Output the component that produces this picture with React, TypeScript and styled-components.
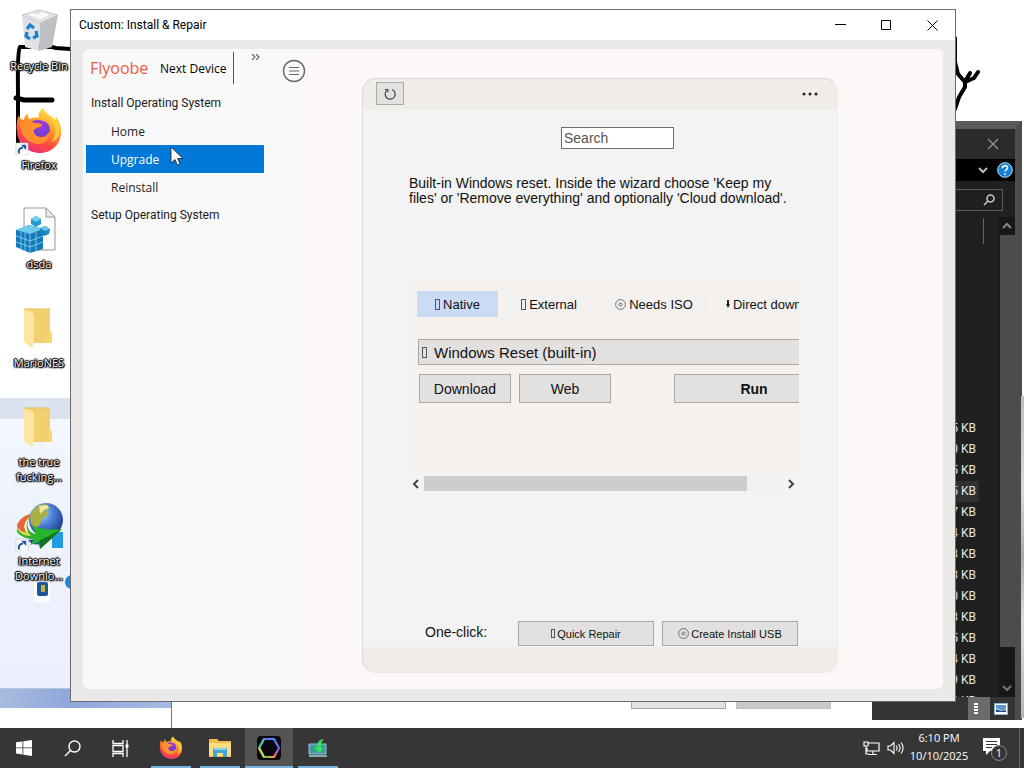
import React from 'react';
import styled, { createGlobalStyle, css } from 'styled-components';

const ui = `"Open Sans", "Noto Sans", sans-serif`;
const compact = `Roboto, "Open Sans", sans-serif`;
const sans = `"Liberation Sans", Arial, sans-serif`;

const GlobalStyle = createGlobalStyle`
  *, *::before, *::after { box-sizing: border-box; }
  html, body, #root { height: 100%; }
  body { margin: 0; background: #fff; overflow: hidden; }
  button, input { font: inherit; color: inherit; margin: 0; padding: 0; border: 0; background: none; }
  svg { display: block; flex: none; }
`;

const Screen = styled.div`
  display: flex;
  flex-direction: column;
  height: 100vh;
  font-family: ${ui};
  font-size: 12px;
  color: #1a1a1a;
`;

const Desktop = styled.div`
  position: relative;
  flex: 1;
  min-height: 0;
  overflow: hidden;
  background: #fff;
`;

/* ---------- things lying on the desktop behind the main window ---------- */

const Doodle = styled.svg`
  position: absolute;
  top: 36px;
  ${(p: { $side: 'left' | 'right' }) => (p.$side === 'left' ? 'left: 0;' : 'right: 44px;')}
`;

const BackPanel = styled.div`
  position: absolute;
  left: 0;
  top: 398px;
  bottom: 20px;
  width: 171px;
  display: flex;
  flex-direction: column;
  background: linear-gradient(#f4f9fe, #eef2fd 40%, #edf0fc);
`;

const BackPanelHeader = styled.div`
  height: 21px;
  background: #dbe3ee;
`;

const BackPanelFooter = styled.div`
  height: 20px;
  margin-top: auto;
  background: linear-gradient(90deg, #a9bbde, #8fa8dc 40%, #a7b9e4);
  border-top: 1px solid #b9c5dc;
`;

const BackDialog = styled.div`
  position: absolute;
  left: 171px;
  right: 151px;
  bottom: 0;
  height: 60px;
  padding: 0 42px 19px 0;
  display: flex;
  justify-content: flex-end;
  align-items: flex-end;
  gap: 10px;
  background: #fff;
  border-left: 1px solid #777;
`;

const BackDialogButton = styled.button<{ $dark?: boolean }>`
  width: 95px;
  height: 24px;
  background: ${(p) => (p.$dark ? '#c9c9c9' : '#e2e2e2')};
  border: 1px solid ${(p) => (p.$dark ? '#bdbdbd' : '#a8a8a8')};
`;

const Explorer = styled.section`
  position: absolute;
  top: 121px;
  right: 2px;
  bottom: 8px;
  width: 150px;
  display: flex;
  flex-direction: column;
  background: #202020;
  border-top: 8px solid #5a5a5a;
  border-right: 7px solid #4c4c4c;
  color: #e4e4e4;
`;

const ExplorerTitle = styled.div`
  height: 30px;
  padding-right: 16px;
  display: flex;
  align-items: center;
  justify-content: flex-end;
  background: #2b2b2b;
`;

const ExplorerRibbon = styled.div`
  height: 22px;
  padding-right: 2px;
  display: flex;
  align-items: center;
  justify-content: flex-end;
  gap: 9px;
  background: #000;
`;

const ExplorerSearch = styled.div`
  height: 22px;
  margin: 8px 12px 6px 0;
  padding-right: 7px;
  display: flex;
  align-items: center;
  justify-content: flex-end;
  border: 1px solid #5c5c5c;
`;

const ExplorerContent = styled.div`
  flex: 1;
  min-height: 0;
  display: flex;
`;

const SizeColumn = styled.div`
  flex: 1;
  overflow: hidden;
`;

const ColumnHeader = styled.div`
  height: 26px;
  margin: 1px 15px 174px 0;
  border-right: 1px solid #636363;
`;

const SizeList = styled.ul`
  margin: 0;
  padding: 0;
  list-style: none;
`;

const SizeItem = styled.li<{ $active?: boolean }>`
  height: 21px;
  margin-right: 20px;
  padding-right: 3px;
  line-height: 20px;
  text-align: right;
  font-family: ${compact};
  background: ${(p) => (p.$active ? '#303030' : 'transparent')};
`;

const ExplorerScroll = styled.div`
  width: 16px;
  display: flex;
  flex-direction: column;
  align-items: center;
  background: #171717;
`;

const ExplorerThumb = styled.div`
  width: 15px;
  flex: 1;
  background: #4d4d4d;
`;

const ScrollEnd = styled.button<{ $tall?: boolean }>`
  width: 16px;
  height: ${(p) => (p.$tall ? 50 : 18)}px;
  padding-bottom: ${(p) => (p.$tall ? 4 : 0)}px;
  display: flex;
  justify-content: center;
  align-items: ${(p) => (p.$tall ? 'flex-end' : 'center')};
`;

const ExplorerStatus = styled.div`
  height: 23px;
  display: flex;
  justify-content: flex-end;
  padding-right: 3px;
  align-items: center;
  background: #333;
`;

const ViewButton = styled.button<{ $on?: boolean }>`
  width: 22px;
  height: 23px;
  display: flex;
  align-items: center;
  justify-content: center;
  background: ${(p) => (p.$on ? '#6b6b6b' : 'transparent')};
`;

const EdgeStrip = styled.div`
  position: absolute;
  right: 0;
  top: 396px;
  bottom: 10px;
  width: 3px;
  background: linear-gradient(#bdbdbd, #d8d8d8 30%, #a8a8a8 50%, #dcdcdc 70%, #b4b4b4);
`;

/* ---------- desktop shortcuts ---------- */

const Shortcuts = styled.nav`
  position: relative;
  width: 78px;
`;

const Shortcut = styled.a`
  height: 99px;
  padding-top: 8px;
  display: flex;
  flex-direction: column;
  align-items: center;
  gap: 2px;
  color: #fff;
  text-decoration: none;
  text-align: center;
  white-space: nowrap;
  line-height: 15px;
  font-size: 11px;
  text-shadow: 0 0 1px #000, 1px 1px 1px #000, 0 0 2px #000, 1px 0 1px #000, 0 1px 2px #000, -1px 0 1px #000, 0 -1px 1px #000;
`;

const Tray = styled.svg`
  position: absolute;
  left: 32px;
  top: 574px;
`;

/* ---------- main window ---------- */

const Window = styled.main`
  position: absolute;
  left: 70px;
  right: 68px;
  top: 9px;
  bottom: 26px;
  display: flex;
  flex-direction: column;
  background: #ebe9e8;
  border: 1px solid #6b6b6b;
`;

const TitleBar = styled.header`
  height: 30px;
  display: flex;
  align-items: center;
  background: #fff;
  color: #000;
`;

const Title = styled.h1`
  margin: 0;
  padding-left: 8px;
  flex: 1;
  font-family: ${compact};
  font-weight: 400;
  font-size: 12px;
`;

const CaptionButton = styled.button`
  width: 46px;
  height: 30px;
  display: flex;
  align-items: center;
  justify-content: center;
`;

const Client = styled.div`
  flex: 1;
  min-height: 0;
  margin: 9px 12px 12px;
  display: flex;
  border-radius: 6px;
  background: linear-gradient(90deg, #f9f9f9 0, #f9f9f9 182px, #fcf8f7 240px);
`;

const Sidebar = styled.aside`
  width: 181px;
  padding-left: 3px;
`;

const SideTop = styled.div`
  height: 40px;
  padding: 3px 3px 0 4px;
  display: flex;
`;

const Brand = styled.div`
  width: 70px;
  line-height: 32px;
  font-size: 16px;
  font-weight: 500;
  color: #ee5a3c;
`;

const NextDevice = styled.button`
  height: 32px;
  padding-right: 7px;
  border-right: 1px solid #555;
  color: #000;
`;

const More = styled.button`
  height: 10px;
  margin-left: auto;
  display: flex;
  align-items: center;
`;

const Tree = styled.nav`
  display: flex;
  flex-direction: column;
`;

const treeItem = css`
  height: 28px;
  text-decoration: none;
  color: #1c1c1c;
`;

const TreeGroup = styled.div`
  ${treeItem}
  padding-left: 5px;
  line-height: 28px;
  font-family: ${compact};
`;

const TreeLink = styled.a<{ $active?: boolean }>`
  ${treeItem}
  padding-left: 25px;
  line-height: 30px;
  ${(p) => p.$active && 'background: #0078d7; color: #fff;'}
`;

const Main = styled.div`
  flex: 1;
  min-width: 0;
  padding: 0 105px 16px 18px;
  display: flex;
  align-items: flex-start;
  gap: 56px;
`;

const MenuButton = styled.button`
  margin-top: 10px;
`;

const Card = styled.section`
  align-self: stretch;
  flex: 1;
  min-width: 0;
  margin-top: 29px;
  display: flex;
  flex-direction: column;
  overflow: hidden;
  border-radius: 14px;
  background: #f0ede9;
  border: 1px solid #dcd9d6;
  border-right-color: #f0ede9;
  border-bottom-color: #ebe8e3;
  font-family: ${sans};
  color: #111;
`;

const CardTop = styled.div`
  height: 31px;
  padding: 3px 19px 5px 13px;
  display: flex;
  align-items: center;
  justify-content: space-between;
`;

const ReloadButton = styled.button`
  width: 28px;
  height: 23px;
  display: flex;
  align-items: center;
  justify-content: center;
  background: #e3e2e1;
  border: 1px solid #aaa;
`;

const CardBody = styled.div`
  flex: 1;
  min-height: 0;
  padding: 17px 38px 1px 45px;
  display: flex;
  flex-direction: column;
  background: #f3f3f3;
`;

const CardFoot = styled.div`
  height: 25px;
`;

const SearchBox = styled.input`
  width: 113px;
  height: 22px;
  margin-left: 153px;
  padding: 0 2px;
  flex: none;
  background: #fff;
  border: 1px solid #6e6e6e;
  font-size: 14px;
  &::placeholder { color: #555; opacity: 1; }
`;

const Description = styled.p`
  height: 104px;
  margin: 27px 0 0 1px;
  font-size: 14px;
  line-height: 15px;
  width: 386px;
`;

const Providers = styled.div`
  height: 194px;
  overflow: hidden;
  background: #f6f1ec;
`;

const ProvidersInner = styled.div`
  width: 440px;
  padding: 11px 9px;
  display: flex;
  flex-direction: column;
  font-size: 15px;
`;

const Chips = styled.div`
  display: flex;
  gap: 6px;
  margin-bottom: 22px;
`;

const Chip = styled.button<{ $width: number; $on?: boolean }>`
  width: ${(p) => p.$width}px;
  height: 26px;
  display: flex;
  flex: none;
  align-items: center;
  justify-content: center;
  gap: 3px;
  white-space: nowrap;
  font-size: 13px;
  background: ${(p) => (p.$on ? '#cadcf5' : '#f3f1ef')};
`;

const Missing = styled.i<{ $small?: boolean }>`
  width: ${(p) => (p.$small ? 4 : 5)}px;
  height: ${(p) => (p.$small ? 9 : 11)}px;
  border: 1px solid #555;
`;

const flatButton = css`
  display: flex;
  align-items: center;
  justify-content: center;
  flex: none;
  background: #e2e1e0;
  border: 1px solid #aaa8a6;
`;

const ProviderTitle = styled.button`
  ${flatButton}
  height: 26px;
  margin-left: 1px;
  padding-left: 3px;
  gap: 7px;
  justify-content: flex-start;
`;

const Actions = styled.div`
  display: flex;
  gap: 8px;
  margin: 9px 0 0 2px;
`;

const Action = styled.button<{ $primary?: boolean }>`
  ${flatButton}
  width: ${(p) => (p.$primary ? 160 : 92)}px;
  height: 29px;
  font-size: 14px;
  ${(p) => p.$primary && 'margin-left: 55px; font-weight: 700;'}
`;

const HScroll = styled.div`
  height: 15px;
  margin-top: 2px;
  display: flex;
  align-items: center;
`;

const HTrack = styled.div`
  flex: 1;
  height: 15px;
  background: #f1f1f1;
`;

const HThumb = styled.div`
  width: 90%;
  height: 15px;
  background: #cdcdcd;
`;

const HArrow = styled.button`
  width: 16px;
  height: 15px;
  display: flex;
  align-items: center;
  justify-content: center;
`;

const OneClick = styled.div`
  margin: auto 1px 0 17px;
  display: flex;
  gap: 8px;
  font-size: 14px;
`;

const OneClickLabel = styled.span`
  flex: 1;
  line-height: 22px;
`;

const OneClickButton = styled.button`
  ${flatButton}
  width: 136px;
  height: 25px;
  gap: 2px;
  font-size: 11px;
`;

const Pointer = styled.svg`
  position: absolute;
  left: 99px;
  top: 136px;
`;

/* ---------- taskbar ---------- */

const Taskbar = styled.footer`
  height: 40px;
  display: flex;
  background: #363636;
  color: #fff;
`;

const TaskButton = styled.button<{ $open?: boolean; $active?: boolean }>`
  position: relative;
  width: 48px;
  height: 40px;
  display: flex;
  align-items: center;
  justify-content: center;
  background: ${(p) => (p.$active ? '#545454' : 'transparent')};
  &::after {
    content: '';
    display: ${(p) => (p.$open ? 'block' : 'none')};
    position: absolute;
    bottom: 0;
    left: ${(p) => (p.$active ? 0 : 4)}px;
    right: ${(p) => (p.$active ? 0 : 4)}px;
    height: 2px;
    background: #76b4e0;
  }
`;

const RunningApps = styled.div`
  display: flex;
  gap: 1px;
  margin-left: 3px;
`;

const Status = styled.div`
  margin-left: auto;
  display: flex;
  align-items: center;
`;

const TrayButton = styled.button`
  width: 24px;
  height: 40px;
  display: flex;
  align-items: center;
  justify-content: center;
`;

const Clock = styled.time`
  width: 64px;
  padding-bottom: 2px;
  line-height: 18px;
  text-align: center;
  white-space: nowrap;
  font-size: 11px;
`;

const Notifications = styled.button`
  width: 48px;
  height: 40px;
  display: flex;
  align-items: center;
  justify-content: center;
`;

const ShowDesktop = styled.button`
  width: 5px;
  height: 40px;
  border-left: 1px solid #666;
`;

/* ---------- drawings ---------- */

const LinkBadge = () => (
  <g>
    <rect x="1" y="36" width="12" height="12" fill="#fff" stroke="#bbb" strokeWidth=".6" />
    <path d="M4 46.500c-.8-3.500.5-5.500 4-6" stroke="#24579c" strokeWidth="2" fill="none" />
    <path d="M6 37.800h5.200V43z" fill="#24579c" />
  </g>
);

const FirefoxArt = ({ id, size, badge }: { id: string; size: number; badge?: boolean }) => (
  <svg width={size} height={size} viewBox="0 0 48 48" aria-hidden="true">
    <defs>
      <linearGradient id={id + 'a'} x1=".8" y1="0" x2=".3" y2="1">
        <stop offset="0" stopColor="#fff04a" />
        <stop offset=".35" stopColor="#ffa62b" />
        <stop offset=".7" stopColor="#ff4a3e" />
        <stop offset="1" stopColor="#e8307a" />
      </linearGradient>
      <radialGradient id={id + 'b'} cx=".6" cy=".2" r=".9">
        <stop offset="0" stopColor="#a03bdc" />
        <stop offset="1" stopColor="#5a3fd0" />
      </radialGradient>
    </defs>
    <path d="M28 1c-5 4-5 8-4 10-4-1-7 0-9 1-2-1-3-4-2-6-3 2-4 5-4 7C5 13 4 9 4 8 2 12 1 18 2 25c1 12 11 21 23 21 12 0 21-9 21-21 0-7-2-12-6-16 1 2 1 4 1 5C37 9 30 8 28 1z" fill={`url(#${id}a)`} />
    <path d="M28 1c0 8 10 10 12 19 1 7-1 12-4 15 8-2 11-10 8-19C42 11 32 9 28 1z" fill="#ffd43a" opacity=".8" />
    <path d="M16 15c3-3 13-3 17 2 3 4 2 11-2 14-5 3-12 1-14-4-1-4-2-8-1-12z" fill={`url(#${id}b)`} />
    <path d="M5 16c5-4 11-4 14 0 3 0 7 0 8 2-1 3-6 2-8 5-1 4 3 7 7 7 4 0 6-2 8-5 1 7-4 12-10 12C13 37 5 28 5 16z" fill="#ff8f2c" />
  </svg>
);

const FirefoxShortcut = () => (
  <svg width="48" height="48" viewBox="0 0 48 48" aria-hidden="true">
    <FirefoxArt id="fxd" size={48} />
    <LinkBadge />
  </svg>
);

const RecycleArt = () => (
  <svg width="48" height="48" viewBox="0 0 48 48" aria-hidden="true">
    <path d="M7 7l18 7-1 29-14-4z" fill="#dfe1e4" />
    <path d="M25 14l18-7-6 32-13 4z" fill="#bcc0c5" />
    <path d="M7 7l17-5 19 5-18 8z" fill="#e4e6e8" stroke="#c6c9cd" />
    <path d="M12 7l5-3 5 2 5-3 9 4-11 5z" fill="#f9f9f9" stroke="#ccc" strokeWidth=".6" />
    <g fill="none" stroke="#1680d3" strokeWidth="3.200">
      <path d="M12 21l3-4 4 3" />
      <path d="M21 23l1 5-4 2" />
      <path d="M15 31l-4-3 1-4" />
    </g>
  </svg>
);

const RegistryArt = () => (
  <svg width="48" height="48" viewBox="0 0 48 48" aria-hidden="true">
    <path d="M9 2h22l9 9v33H9z" fill="#fcfcfc" stroke="#999" />
    <path d="M31 2v9h9z" fill="#e8e8e8" stroke="#999" />
    <path d="M1 24l13-5 14 4v20l-13 4-14-6z" fill="#1579b9" />
    <path d="M1 24l13-5 14 4-13 5z" fill="#6ecbee" />
    <path d="M15 28v19M6 26v18M10 27v18M21 26v19M1 30l14 5 13-5M1 36l14 5 13-5" stroke="#8ed8f4" strokeWidth=".8" fill="none" />
    <path d="M16 13l5-3 5 3v5l-5 3-5-3z" fill="#219bd2" />
    <path d="M16 13l5-3 5 3-5 3z" fill="#75cdef" />
    <path d="M25 22l5-2 5 3-1 5-5 2-4-3z" fill="#1b86c0" />
    <path d="M25 22l5-2 5 3-5 2z" fill="#6ac5ea" />
  </svg>
);

const FolderArt = () => (
  <svg width="48" height="48" viewBox="0 0 48 48" aria-hidden="true">
    <path d="M10 4h25v22l2 2v10H15z" fill="#f6d77c" />
    <path d="M18 5h17v33H18z" fill="#f3cf70" />
    <path d="M9 4l10 5v28l-2 6-8-6z" fill="#fce6a4" />
    <path d="M35 26l2 2v10h-7z" fill="#f8d66e" />
    <path d="M9 4h26" stroke="#e0b958" />
  </svg>
);

const GlobeArt = () => (
  <svg width="48" height="48" viewBox="0 0 48 48" aria-hidden="true">
    <defs>
      <radialGradient id="globe" cx=".35" cy=".3" r=".8">
        <stop offset="0" stopColor="#b7dcf8" />
        <stop offset=".45" stopColor="#4a7fd6" />
        <stop offset="1" stopColor="#18347c" />
      </radialGradient>
    </defs>
    <rect x="37" y="29" width="11" height="16" fill="#239be0" />
    <path d="M13 37l24-2-8 7-12-1z" fill="#1c4e9c" />
    <path d="M17 11C6 13 1 21 2 29c3 4 9 7 19 8l3-6C14 32 8 22 17 11z" fill="#35b030" />
    <path d="M17 11C7 13 2 20 2 26c4 5 8 7 14 7-6-5-6-14 1-22z" fill="#d8df4a" />
    <path d="M17 11C8 12 3 18 2 23c2 4 5 6 9 7-3-6-1-13 6-19z" fill="#e8643c" />
    <path d="M15 15c-4 3-5 8-2 14-4-1-5-8-1-12z" fill="#fff" />
    <circle cx="31" cy="17" r="17" fill="url(#globe)" />
    <path d="M16 10c3-6 9-9 14-9l5 4-4 3 2 4-6 4-2 6-5 4c-4-3-6-9-4-16z" fill="#a9b045" />
    <path d="M24 3l8-1 2 3-5 2-4 4z" fill="#eee9a5" />
    <path d="M17 22c9 5 18 5 30 4L25 46l-1-7-9 3 7-9z" fill="#25b52c" />
    <path d="M47 26L25 46l-1-8z" fill="#11751c" />
    <LinkBadge />
  </svg>
);

const Disc = ({ size }: { size: number }) => (
  <svg width={size} height={size} viewBox="0 0 11 11" fill="none" stroke="#555" aria-hidden="true">
    <circle cx="5.500" cy="5.500" r="4.900" strokeWidth=".8" />
    <circle cx="5.500" cy="5.500" r="1.500" strokeWidth=".9" />
  </svg>
);

const Chevron = ({ d, color }: { d: string; color: string }) => (
  <svg width="10" height="10" viewBox="0 0 10 10" fill="none" stroke={color} strokeWidth="2" aria-hidden="true">
    <path d={d} />
  </svg>
);

const sizes = ['5 KB', '0 KB', '5 KB', '5 KB', '7 KB', '4 KB', '3 KB', '3 KB', '0 KB', '3 KB', '5 KB', '4 KB', '9 KB', '2 KB'];

const shortcuts = [
  { label: ['Recycle Bin'], art: <RecycleArt /> },
  { label: ['Firefox'], art: <FirefoxShortcut /> },
  { label: ['dsda'], art: <RegistryArt /> },
  { label: ['MarioNES'], art: <FolderArt /> },
  { label: ['the true', 'fucking...'], art: <FolderArt /> },
  { label: ['Internet', 'Downlo...'], art: <GlobeArt /> },
];

export default function App() {
  return (
    <Screen>
      <GlobalStyle />
      <Desktop>
        <BackPanel>
          <BackPanelHeader />
          <BackPanelFooter />
        </BackPanel>
        <Doodle $side="left" width="72" height="124" viewBox="0 0 72 124" fill="none" stroke="#000" strokeWidth="4" strokeLinecap="round">
          <path d="M70 13l-14-1-4-1-32 0c-3 4-2 30-2 50v56" />
          <path d="M16 62l8 2h28" strokeWidth="5" />
        </Doodle>
        <Doodle $side="right" width="26" height="80" viewBox="0 0 26 80" fill="none" stroke="#000" strokeWidth="4" strokeLinecap="round">
          <path d="M1 2v24l3 12 7 8 9-4 4-6M12 44l4-7M11 47v4l-6 10-4 12" />
        </Doodle>
        <Shortcuts aria-label="Desktop">
          {shortcuts.map((s) => (
            <Shortcut href="#" key={s.label[0]}>
              {s.art}
              <span>
                {s.label[0]}
                {s.label[1] && <><br />{s.label[1]}</>}
              </span>
            </Shortcut>
          ))}
        </Shortcuts>
        <Tray width="40" height="28" viewBox="0 0 40 28" aria-hidden="true">
          <path d="M2 8h16v20H2z" fill="#fff" opacity=".8" />
          <rect x="5" y="8" width="11" height="14" rx="2" fill="#1d5796" />
          <path d="M9 11h4v7H9z" fill="#c8b440" />
          <circle cx="40" cy="8" r="7" fill="#1d86d0" />
        </Tray>
        <BackDialog>
          <BackDialogButton aria-label="Accept" />
          <BackDialogButton aria-label="Dismiss" $dark />
        </BackDialog>
        <Explorer>
          <ExplorerTitle>
            <svg width="12" height="12" viewBox="0 0 12 12" stroke="#999" strokeWidth="1.200" aria-hidden="true"><path d="M1 1l10 10M11 1L1 11" /></svg>
          </ExplorerTitle>
          <ExplorerRibbon>
            <Chevron d="M1 3l4 4 4-4" color="#bbb" />
            <svg width="16" height="16" viewBox="0 0 16 16" aria-hidden="true">
              <circle cx="8" cy="8" r="7.300" fill="#1580d0" stroke="#bfe0f7" />
              <path d="M5.500 6.200c0-3.400 5-3.200 5-.4 0 1.800-2.400 1.800-2.400 3.800M8 11.200v1.600" stroke="#fff" strokeWidth="1.600" fill="none" />
            </svg>
          </ExplorerRibbon>
          <ExplorerSearch>
            <svg width="12" height="12" viewBox="0 0 12 12" fill="none" stroke="#c4c4c4" strokeWidth="1.600" aria-hidden="true"><circle cx="7.500" cy="4.500" r="3.500" /><path d="M5 7L1 11" /></svg>
          </ExplorerSearch>
          <ExplorerContent>
            <SizeColumn>
              <ColumnHeader />
              <SizeList>
                {sizes.map((s, i) => <SizeItem key={i} $active={i === 3}>{s}</SizeItem>)}
              </SizeList>
            </SizeColumn>
            <ExplorerScroll>
              <ScrollEnd aria-label="Scroll up"><Chevron d="M1 7l4-4 4 4" color="#888" /></ScrollEnd>
              <ExplorerThumb />
              <ScrollEnd aria-label="Scroll down" $tall><Chevron d="M1 3l4 4 4-4" color="#777" /></ScrollEnd>
            </ExplorerScroll>
          </ExplorerContent>
          <ExplorerStatus>
            <ViewButton $on aria-label="Details">
              <svg width="14" height="12" viewBox="0 0 14 12" aria-hidden="true"><path d="M4 0v12" stroke="#fff" strokeWidth="4" strokeDasharray="2 1" /></svg>
            </ViewButton>
            <ViewButton aria-label="Large icons">
              <svg width="14" height="12" viewBox="0 0 14 12" aria-hidden="true"><rect x=".5" y=".5" width="13" height="11" fill="#fff" stroke="#8fb4d6" /><path d="M2 2h10v4l-4 2-6-3z" fill="#5a9bd6" /><path d="M2 6l5 2 5-1v2H2z" fill="#23507d" /></svg>
            </ViewButton>
          </ExplorerStatus>
        </Explorer>
        <EdgeStrip />

        <Window>
          <TitleBar>
            <Title>Custom: Install &amp; Repair</Title>
            <CaptionButton aria-label="Minimize"><svg width="11" height="11" viewBox="0 0 11 11" stroke="#000"><path d="M0 4.500h11" /></svg></CaptionButton>
            <CaptionButton aria-label="Maximize"><svg width="11" height="11" viewBox="0 0 11 11" stroke="#000" fill="none"><path d="M.5 .5h9v9H.5z" /></svg></CaptionButton>
            <CaptionButton aria-label="Close"><svg width="11" height="11" viewBox="0 0 11 11" stroke="#000"><path d="M.5 .5l10 10M10.500 .5l-10 10" /></svg></CaptionButton>
          </TitleBar>
          <Client>
            <Sidebar>
              <SideTop>
                <Brand>Flyoobe</Brand>
                <NextDevice>Next Device</NextDevice>
                <More aria-label="More"><svg width="10" height="6" viewBox="0 0 10 6" fill="none" stroke="#666" strokeWidth="1.200"><path d="M1 0l3 3-3 3M5 0l3 3-3 3" /></svg></More>
              </SideTop>
              <Tree aria-label="Sections">
                <TreeGroup>Install Operating System</TreeGroup>
                <TreeLink href="#">Home</TreeLink>
                <TreeLink href="#" $active>Upgrade</TreeLink>
                <TreeLink href="#">Reinstall</TreeLink>
                <TreeGroup>Setup Operating System</TreeGroup>
              </Tree>
            </Sidebar>
            <Main>
              <MenuButton aria-label="Menu">
                <svg width="24" height="24" viewBox="0 0 24 24" fill="none" stroke="#6a6666">
                  <circle cx="12" cy="12" r="10.500" strokeWidth="1.400" />
                  <path d="M7 8.500h10M7 12h10M7 15.500h10" strokeWidth="1.200" />
                </svg>
              </MenuButton>
              <Card>
                <CardTop>
                  <ReloadButton aria-label="Reload">
                    <svg width="14" height="14" viewBox="0 0 14 14" fill="none" stroke="#444" strokeWidth="1.200"><path d="M9 2.500a5 5 0 1 1-5.200 .9M2 2.500h2.800v2.800" /></svg>
                  </ReloadButton>
                  <button aria-label="Options">
                    <svg width="16" height="4" viewBox="0 0 16 4" fill="#222"><circle cx="2" cy="2" r="1.500" /><circle cx="8" cy="2" r="1.500" /><circle cx="14" cy="2" r="1.500" /></svg>
                  </button>
                </CardTop>
                <CardBody>
                  <SearchBox aria-label="Search" placeholder="Search" />
                  <Description>Built-in Windows reset. Inside the wizard choose 'Keep my files' or 'Remove everything' and optionally 'Cloud download'.</Description>
                  <Providers>
                    <ProvidersInner>
                      <Chips>
                        <Chip $width={81} $on><Missing />Native</Chip>
                        <Chip $width={90}><Missing />External</Chip>
                        <Chip $width={108}><Disc size={11} />Needs ISO</Chip>
                        <Chip $width={124}>
                          <svg width="4" height="8" viewBox="0 0 4 8" fill="#222" aria-hidden="true"><path d="M1 0h2v4h1L2 8 0 4h1z" /></svg>
                          Direct download
                        </Chip>
                      </Chips>
                      <ProviderTitle><Missing />Windows Reset (built-in)</ProviderTitle>
                      <Actions>
                        <Action>Download</Action>
                        <Action>Web</Action>
                        <Action $primary>Run</Action>
                      </Actions>
                    </ProvidersInner>
                  </Providers>
                  <HScroll>
                    <HArrow aria-label="Scroll left"><Chevron d="M7 1L3 5l4 4" color="#444" /></HArrow>
                    <HTrack><HThumb /></HTrack>
                    <HArrow aria-label="Scroll right"><Chevron d="M3 1l4 4-4 4" color="#444" /></HArrow>
                  </HScroll>
                  <OneClick>
                    <OneClickLabel>One-click:</OneClickLabel>
                    <OneClickButton><Missing $small />Quick Repair</OneClickButton>
                    <OneClickButton><Disc size={11} />Create Install USB</OneClickButton>
                  </OneClick>
                </CardBody>
                <CardFoot />
              </Card>
            </Main>
          </Client>
          <Pointer width="14" height="20" viewBox="0 0 14 20" aria-hidden="true">
            <path d="M1 1v16l4-3.500 2.500 5.500 2.500-1-2.500-5.500H13z" fill="#fff" stroke="#222" strokeWidth=".8" />
          </Pointer>
        </Window>
      </Desktop>

      <Taskbar>
        <TaskButton aria-label="Start">
          <svg width="16" height="16" viewBox="0 0 16 16" fill="#fff"><path d="M0 2.300l6.500-.9v6.100H0zM7.300 1.300L16 0v7.500H7.300zM0 8.300h6.500v6.200L0 13.600zM7.300 8.300H16V16l-8.700-1.300z" /></svg>
        </TaskButton>
        <TaskButton aria-label="Search">
          <svg width="17" height="17" viewBox="0 0 17 17" fill="none" stroke="#fff" strokeWidth="1.400"><circle cx="10.500" cy="6.500" r="5.500" /><path d="M6.500 10.500L1 16" /></svg>
        </TaskButton>
        <TaskButton aria-label="Task View">
          <svg width="17" height="17" viewBox="0 0 17 17" fill="none" stroke="#fff" strokeWidth="1.300"><path d="M1 0v3.500h10V0M1 17v-3.500h10V17M1 5.500h10v6H1zM15 0v17" /><path d="M13.500 4.500h3v3h-3z" fill="#fff" stroke="none" /></svg>
        </TaskButton>
        <RunningApps>
          <TaskButton $open aria-label="Firefox"><FirefoxArt id="fxt" size={24} /></TaskButton>
          <TaskButton $open aria-label="File Explorer">
            <svg width="22" height="20" viewBox="0 0 22 20"><path d="M0 1h8l2 2h12v16H0z" fill="#f0bd4a" /><path d="M0 5h22v13H0z" fill="#fbdc82" /><path d="M4 10h14v9h-4v-4H8v4H4z" fill="#43a6cf" /><path d="M5 10h12v2H5z" fill="#8bd3ea" /></svg>
          </TaskButton>
          <TaskButton $open $active aria-label="Flyoobe">
            <svg width="24" height="24" viewBox="0 0 24 24" fill="none" strokeWidth="2.200">
              <defs>
                <linearGradient id="hex" x1=".8" y1="0" x2=".2" y2="1">
                  <stop offset="0" stopColor="#3a9cf0" /><stop offset=".3" stopColor="#7a5cf0" /><stop offset=".55" stopColor="#e05aa0" /><stop offset=".8" stopColor="#f5a03a" /><stop offset="1" stopColor="#4ccf6a" />
                </linearGradient>
              </defs>
              <rect width="24" height="24" rx="4" fill="#0b0710" />
              <path d="M7 3h10l5 9-5 9H7l-5-9z" stroke="url(#hex)" strokeLinejoin="round" />
              <path d="M7 3l-5 9" stroke="#35c9a5" /><path d="M2 12l5 9" stroke="#b9d84a" />
            </svg>
          </TaskButton>
          <TaskButton $open aria-label="Setup">
            <svg width="20" height="18" viewBox="0 0 20 18"><path d="M1 5h17v10H1z" fill="#4f93ac" stroke="#8cc3d4" /><path d="M3 7h13v6H3z" fill="#2fa08e" /><path d="M1 16h18v2H1z" fill="#8aa" /><path d="M16 0c-5 0-7 4-7 8H6l5 6 5-5h-3c0-4 0-6 3-9z" fill="#37e05a" /></svg>
          </TaskButton>
        </RunningApps>
        <Status>
          <TrayButton aria-label="Network">
            <svg width="17" height="15" viewBox="0 0 17 15" fill="none" stroke="#fff" strokeWidth="1.200"><path d="M5 2h11v8H4V7M10 10v3.500M6 13.500h8M1 1h4v4H1zM3 5v8h3" /></svg>
          </TrayButton>
          <TrayButton aria-label="Volume">
            <svg width="17" height="14" viewBox="0 0 17 14" fill="none" stroke="#fff" strokeWidth="1.100"><path d="M1 5h2.500L7 1.500v11L3.500 9H1zM9 4.500c1.300 1.500 1.300 3.500 0 5M11.500 3c2 2.500 2 5.500 0 8M14 1.500c2.700 3.500 2.700 7.500 0 11" /></svg>
          </TrayButton>
          <Clock>6:10 PM<br />10/10/2025</Clock>
          <Notifications aria-label="1 notification">
            <svg width="26" height="26" viewBox="0 0 26 26">
              <path d="M1 3h17v13H8l-4 4v-4H1z" fill="#fff" />
              <path d="M4 6.500h11M4 9.500h11M4 12.500h6" stroke="#363636" />
              <circle cx="17" cy="18" r="7.500" fill="#363636" stroke="#888" />
              <text x="17" y="22" textAnchor="middle" fontSize="11" fill="#fff">1</text>
            </svg>
          </Notifications>
          <ShowDesktop aria-label="Show desktop" />
        </Status>
      </Taskbar>
    </Screen>
  );
}
